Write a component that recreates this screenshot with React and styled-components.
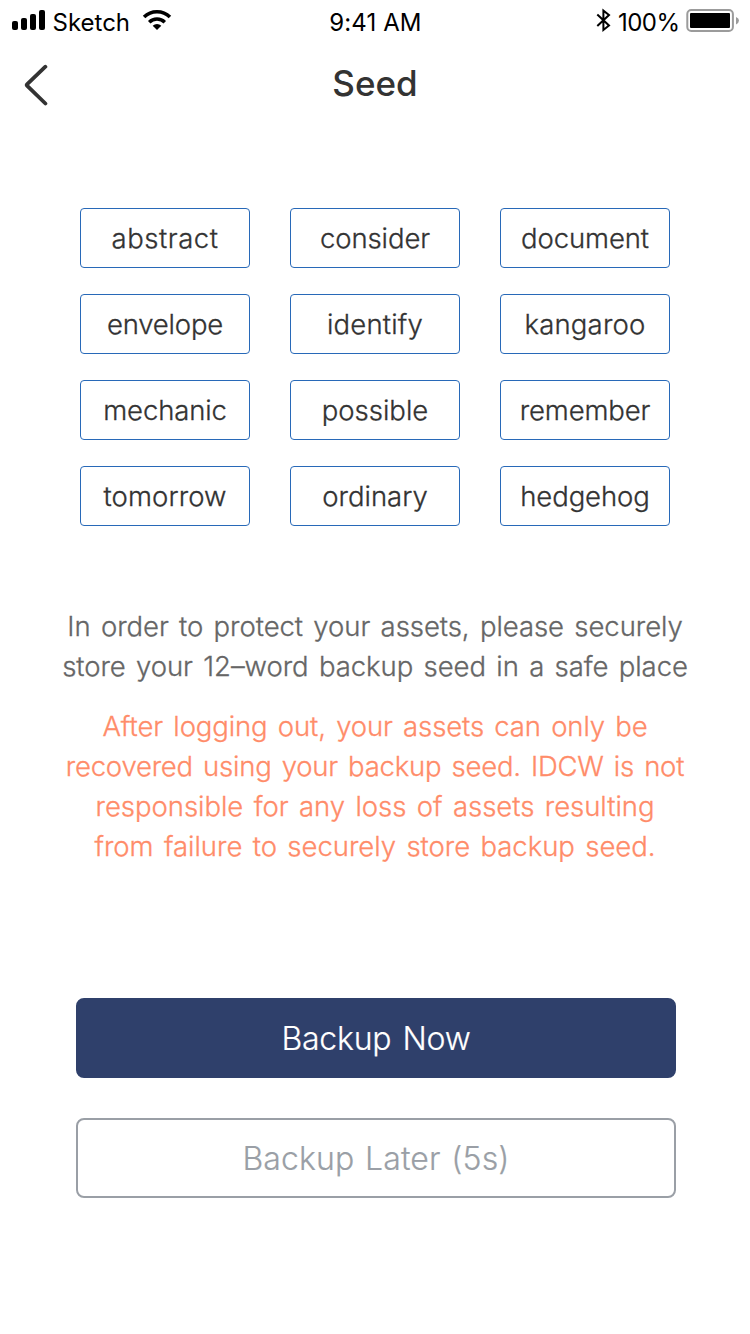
import React from "react";
import styled, { createGlobalStyle } from "styled-components";

const GlobalStyle = createGlobalStyle`
  *, *::before, *::after { box-sizing: border-box; }
  body { margin: 0; background: #fff; }
`;

const Screen = styled.div`
  width: 750px;
  height: 1334px;
  display: flex;
  flex-direction: column;
  overflow: hidden;
  background: #fff;
  color: #333;
  font-family: Inter, "Liberation Sans", sans-serif;
  font-weight: 300;
`;

const StatusBar = styled.div`
  height: 40px;
  padding: 0 11px 0 12px;
  display: grid;
  grid-template-columns: 1fr auto 1fr;
  color: #000;
  font-size: 24px;
  font-weight: 400;
  line-height: 45px;

  svg { display: block; flex: none; }
`;

const StatusGroup = styled.div`
  display: flex;
  align-items: flex-start;
  justify-content: ${p => (p.$end ? "flex-end" : "flex-start")};
`;

const Carrier = styled.span`
  margin: 0 12px 0 6.5px;
`;

const Clock = styled.span`
  letter-spacing: 0.1px;
`;

const Percent = styled.span`
  margin: 0 6.5px 0 7px;
  letter-spacing: -0.5px;
`;

const NavBar = styled.header`
  height: 88px;
  padding: 0 24px;
  display: grid;
  grid-template-columns: 60px 1fr 60px;
  align-items: center;
`;

const BackButton = styled.button`
  width: 44px;
  height: 44px;
  padding: 0;
  border: 0;
  background: none;
  color: #333;

  svg { display: block; }
`;

const Title = styled.h1`
  margin: 0;
  padding-bottom: 2px;
  color: #333;
  font-size: 35px;
  font-weight: 500;
  line-height: 86px;
  text-align: center;
`;

const SeedGrid = styled.div`
  margin: 80px 80px 0;
  display: grid;
  grid-template-columns: repeat(3, 170px);
  grid-auto-rows: 60px;
  gap: 26px 40px;
`;

const SeedWord = styled.div`
  border: 1px solid #2869b8;
  border-radius: 4px;
  font-size: 27.5px;
  line-height: 58px;
  text-align: center;
  white-space: nowrap;
  letter-spacing: ${p => p.$spacing}px;
  -webkit-text-stroke: 0.3px currentColor;
`;

const Notes = styled.div`
  margin-top: 80px;
  display: flex;
  flex-direction: column;
  gap: 20px;
`;

const Note = styled.p`
  margin: 0;
  color: ${p => (p.$warning ? "#ff8c69" : "#666")};
  font-size: 27.5px;
  line-height: 40px;
  text-align: center;
  -webkit-text-stroke: 0.3px currentColor;
`;

const Line = styled.span`
  display: block;
  white-space: nowrap;
  word-spacing: 2.7px;
  letter-spacing: ${p => p.$spacing}px;
`;

const Actions = styled.div`
  margin: 132px 74px 0 76px;
  display: flex;
  flex-direction: column;
  gap: 40px;
`;

const Button = styled.button`
  height: 80px;
  padding: 2px 0 0;
  border: 2px solid ${p => (p.$primary ? "#2f406b" : "#9a9fa6")};
  border-radius: 8px;
  background: ${p => (p.$primary ? "#2f406b" : "#fff")};
  color: ${p => (p.$primary ? "#fff" : "#9a9fa6")};
  font: inherit;
  font-size: 32px;
  line-height: 74px;
  letter-spacing: ${p => (p.$primary ? -0.25 : 0.12)}px;
  word-spacing: ${p => (p.$primary ? 2.5 : 1.5)}px;
  -webkit-text-stroke: 0.2px currentColor;
`;

const words = [
  ["abstract", 0.55], ["consider", -0.1], ["document", -0.1],
  ["envelope", -0.2], ["identify", 0.2], ["kangaroo", 0.2],
  ["mechanic", -0.12], ["possible", 0], ["remember", -0.15],
  ["tomorrow", 0.1], ["ordinary", -0.02], ["hedgehog", -0.1],
];

const notice = [
  ["In order to protect your assets, please securely", -0.06],
  ["store your 12–word backup seed in a safe place", -0.06],
];

const warning = [
  ["After logging out, your assets can only be", -0.12],
  ["recovered using your backup seed. IDCW is not", -0.23],
  ["responsible for any loss of assets resulting", -0.03],
  ["from failure to securely store backup seed.", -0.03],
];

const SignalIcon = () => (
  <svg width="34" height="40" viewBox="0 0 34 40">
    <rect x="0" y="21" width="6" height="9" rx="2" />
    <rect x="9" y="18" width="6" height="12" rx="2" />
    <rect x="18" y="14" width="6" height="16" rx="2" />
    <rect x="27" y="10" width="6" height="20" rx="2" />
  </svg>
);

const WifiIcon = () => (
  <svg width="30" height="40" viewBox="0 0 30 40" fill="none" stroke="#000" strokeWidth="3.5">
    <path d="M2.06 17.06A18.3 18.3 0 0 1 27.94 17.06" />
    <path d="M7.22 22.22A11 11 0 0 1 22.78 22.22" />
    <path d="M15 30L10.7 25.7A6.1 6.1 0 0 1 19.3 25.7Z" fill="#000" stroke="none" />
  </svg>
);

const BluetoothIcon = () => (
  <svg width="15" height="40" viewBox="0 0 15 40" fill="none" stroke="#000" strokeWidth="2">
    <path d="M1.3 14.6L13 25.4L7.4 30V10.6L13 15L1.3 26" />
  </svg>
);

const BatteryIcon = () => (
  <svg width="53" height="40" viewBox="0 0 53 40">
    <rect x="1.3" y="10" width="45.6" height="21" rx="4" fill="none" stroke="#9b9b9b" strokeWidth="2" />
    <rect x="4" y="13" width="40" height="15" rx="1" />
    <path d="M50 17Q53 18.3 53 20.6T50 24.6Z" fill="#9b9b9b" />
  </svg>
);

const ChevronIcon = () => (
  <svg width="26" height="44" viewBox="0 0 26 44" fill="none" stroke="currentColor" strokeWidth="3.8" strokeLinecap="round">
    <path d="M21.4 4L3 21.6Q2.3 22.3 3 23L21.4 40.8" transform="translate(0 .7)" />
  </svg>
);

export default function App() {
  return (
    <Screen>
      <GlobalStyle />
      <StatusBar>
        <StatusGroup>
          <SignalIcon />
          <Carrier>Sketch</Carrier>
          <WifiIcon />
        </StatusGroup>
        <Clock>9:41 AM</Clock>
        <StatusGroup $end>
          <BluetoothIcon />
          <Percent>100%</Percent>
          <BatteryIcon />
        </StatusGroup>
      </StatusBar>
      <NavBar>
        <BackButton aria-label="Back"><ChevronIcon /></BackButton>
        <Title>Seed</Title>
      </NavBar>
      <SeedGrid>
        {words.map(([word, spacing]) => (
          <SeedWord key={word} $spacing={spacing}>{word}</SeedWord>
        ))}
      </SeedGrid>
      <Notes>
        <Note>
          {notice.map(([text, spacing]) => <Line key={text} $spacing={spacing}>{text}</Line>)}
        </Note>
        <Note $warning>
          {warning.map(([text, spacing]) => <Line key={text} $spacing={spacing}>{text}</Line>)}
        </Note>
      </Notes>
      <Actions>
        <Button $primary>Backup Now</Button>
        <Button>Backup Later (5s)</Button>
      </Actions>
    </Screen>
  );
}
